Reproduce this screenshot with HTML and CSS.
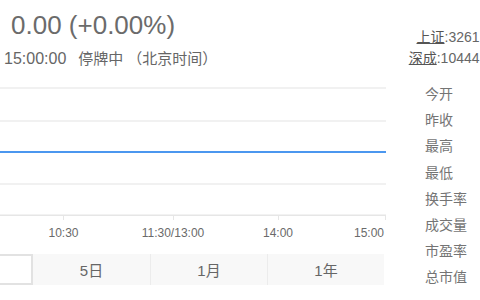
FILE: index.html
```html
<!DOCTYPE html>
<html lang="zh-CN">
<head>
<meta charset="utf-8">
<title>行情</title>
<link rel="stylesheet" href="styles.css">
</head>
<body>
<div class="page">
  <main class="main">
    <header class="quote">
      <div class="change">0.00 (+0.00%)</div>
      <div class="status"><span class="time">15:00:00</span><span class="state">停牌中</span><span class="zone">（北京时间）</span></div>
    </header>
    <div class="chart">
      <svg class="plot" width="470" height="160" viewBox="0 0 470 160">
        <g fill="#f1f1f1">
          <rect x="0" y="3" width="470" height="2"/>
          <rect x="0" y="36" width="470" height="2"/>
          <rect x="0" y="99" width="470" height="2"/>
        </g>
        <rect x="0" y="67" width="470" height="2" fill="#4b97ef"/>
        <rect x="0" y="130.5" width="470" height="1.5" fill="#e6e6e6"/>
        <g fill="#e6e6e6">
          <rect x="147" y="131" width="1" height="5"/>
          <rect x="257" y="131" width="1" height="5"/>
          <rect x="362" y="131" width="1" height="5"/>
          <rect x="469" y="131" width="1" height="5"/>
        </g>
        <g class="ticks">
          <text x="147.5" y="153" text-anchor="middle">10:30</text>
          <text x="257" y="153" text-anchor="middle">11:30/13:00</text>
          <text x="362" y="153" text-anchor="middle">14:00</text>
          <text x="468" y="153" text-anchor="end">15:00</text>
        </g>
      </svg>
    </div>
    <nav class="tabs">
      <span class="tab active">分时</span>
      <span class="tab">5日</span>
      <span class="tab">1月</span>
      <span class="tab">1年</span>
    </nav>
  </main>
  <aside class="side">
    <div class="indices">
      <div class="index"><a class="idx-name">上证</a>:3261.46</div>
      <div class="index"><a class="idx-name">深成</a>:10444.49</div>
    </div>
    <ul class="stats">
      <li>今开</li>
      <li>昨收</li>
      <li>最高</li>
      <li>最低</li>
      <li>换手率</li>
      <li>成交量</li>
      <li>市盈率</li>
      <li>总市值</li>
    </ul>
  </aside>
</div>
</body>
</html>
```

FILE: styles.css
```css
html, body {
  margin: 0;
  padding: 0;
  overflow: hidden;
  background: #fff;
}

body {
  width: 480px;
  height: 300px;
  font-family: "Liberation Sans", Arial, "Noto Sans CJK SC", sans-serif;
  color: #666;
}

.page {
  display: flex;
  margin-left: -84px;
  width: 600px;
}

.main {
  width: 470px;
  flex: none;
}

.quote {
  padding-top: 10px;
}

.change {
  padding-left: 95px;
  font-size: 26px;
  line-height: 30px;
  color: #6b6b6b;
}

.status {
  margin-top: 9px;
  padding-left: 88px;
  font-size: 15px;
  line-height: 20px;
  color: #666;
  display: flex;
}

.status .time {
  font-size: 16px;
  margin-right: 12px;
}

.status .zone {
  margin-left: 4px;
}

.chart {
  margin-top: 15px;
}

.plot {
  display: block;
}

.ticks text {
  font-family: "Liberation Sans", Arial, sans-serif;
  font-size: 12px;
  fill: #6a6a6a;
}

.tabs {
  margin-top: 10px;
  display: flex;
  width: 468px;
  height: 31px;
  background: #f8f8f8;
}

.tab {
  flex: 0 0 117px;
  box-sizing: border-box;
  display: flex;
  align-items: center;
  justify-content: center;
  font-size: 15px;
  color: #666;
  border-left: 1px solid #ececec;
}

.tab:first-child {
  border-left: none;
}

.tab.active {
  background: #fff;
  border: 2px solid #e2e2e2;
}

.tab.active + .tab {
  border-left: none;
}

.side {
  width: 113px;
  flex: none;
}

.indices {
  padding-top: 27px;
  text-align: right;
  font-size: 14px;
  line-height: 21px;
  color: #666;
  white-space: nowrap;
}

.idx-name {
  color: #555;
  text-decoration: underline;
}

.stats {
  list-style: none;
  margin: 11px 0 0;
  padding: 0 0 0 39px;
  font-size: 14px;
  line-height: 26.2px;
  color: #747474;
  font-family: "Noto Sans CJK SC", sans-serif;
}
```
